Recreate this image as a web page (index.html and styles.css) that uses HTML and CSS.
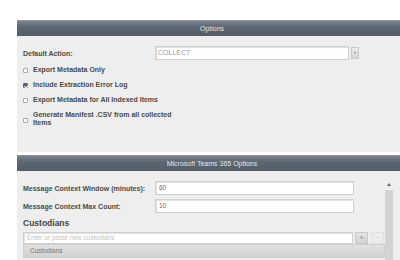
FILE: index.html
```html
<!DOCTYPE html>
<html lang="en">
<head>
    <meta charset="UTF-8">
    <title>Options</title>
    <link rel="stylesheet" href="styles.css">
</head>
<body>
    <div class="page">
        <div class="panel">
            <div class="panel-header">Options</div>
            <div class="panel-body first">
                <div class="field-row">
                    <label class="field-label">Default Action:</label>
                    <div class="select">
                        <div class="select-box">COLLECT</div>
                        <div class="select-btn"><span class="caret"></span></div>
                    </div>
                </div>
                <div class="check-row"><span class="check"></span><span>Export Metadata Only</span></div>
                <div class="check-row"><span class="check checked"></span><span>Include Extraction Error Log</span></div>
                <div class="check-row"><span class="check"></span><span>Export Metadata for All Indexed Items</span></div>
                <div class="check-row two-line"><span class="check"></span><span class="wrap">Generate Manifest .CSV from all collected Items</span></div>
            </div>
        </div>

        <div class="panel">
            <div class="panel-header">Microsoft Teams 365 Options</div>
            <div class="panel-body second">
                <div class="content">
                    <div class="field-row">
                        <label class="field-label">Message Context Window (minutes):</label>
                        <div class="text-input">60</div>
                    </div>
                    <div class="field-row">
                        <label class="field-label">Message Context Max Count:</label>
                        <div class="text-input">10</div>
                    </div>
                    <h3 class="section-title">Custodians</h3>
                    <div class="add-row">
                        <div class="text-input wide placeholder">Enter or paste new custodians</div>
                        <div class="small-btn">+</div>
                        <div class="small-btn light">&minus;</div>
                    </div>
                    <div class="list-header">Custodians</div>
                </div>
                <div class="scrollbar">
                    <div class="scroll-arrow"></div>
                    <div class="scroll-track"></div>
                </div>
            </div>
        </div>
    </div>
</body>
</html>
```

FILE: styles.css
```css
* {
    margin: 0;
    padding: 0;
    box-sizing: border-box;
}

body {
    font-family: 'Liberation Sans', Arial, sans-serif;
    background: #ffffff;
    width: 400px;
    height: 260px;
    overflow: hidden;
}

.page {
    padding: 20px 0 0 17px;
}

.panel {
    width: 390px;
    margin-bottom: 3px;
}

.panel-header {
    height: 16px;
    background: linear-gradient(#7b838f, #5d6571 40%, #545c68);
    color: #e4e6ea;
    font-size: 7px;
    line-height: 16px;
    text-align: center;
    border-top: 1px solid #8c939d;
}

.panel-body {
    background: #eeeeee;
    padding-left: 6px;
}

.panel-body.first {
    height: 116px;
    padding-top: 10px;
}

.panel-body.first .field-row {
    margin-bottom: 2px;
}

.field-row {
    display: flex;
    align-items: center;
    height: 14px;
    margin-bottom: 4px;
}

.field-label {
    width: 132px;
    font-size: 7px;
    font-weight: bold;
    color: #4a4a4a;
}

.select {
    display: flex;
    align-items: center;
}

.select-box {
    width: 194px;
    height: 14px;
    background: #fff;
    border: 1px solid #cfcfcf;
    box-shadow: inset 1px 1px 1px #ddd;
    font-size: 7px;
    color: #999;
    line-height: 12px;
    padding-left: 2px;
}

.select-btn {
    width: 8px;
    height: 12px;
    margin-left: 2px;
    background: linear-gradient(#eaeaea, #d4d4d4);
    border: 1px solid #cacaca;
    display: flex;
    align-items: center;
    justify-content: center;
}

.caret {
    width: 0;
    height: 0;
    border-left: 1.5px solid transparent;
    border-right: 1.5px solid transparent;
    border-top: 2px solid #888;
}

.check-row {
    display: flex;
    align-items: center;
    height: 15px;
    font-size: 7px;
    font-weight: bold;
    color: #4a4a4a;
}

.check-row.two-line {
    height: 20px;
    margin-top: 2px;
}

.wrap {
    width: 140px;
    line-height: 8px;
}

.check {
    position: relative;
    width: 5px;
    height: 5px;
    border: 1px solid #aaa;
    border-radius: 1px;
    background: #fff;
    margin-right: 5px;
    margin-top: 2px;
    flex-shrink: 0;
}

.check.checked {
    background: #5a626d;
    border-color: #5a626d;
}

.check.checked::after {
    content: "";
    position: absolute;
    left: 0.5px;
    top: -0.5px;
    width: 1.5px;
    height: 2.5px;
    border-right: 1px solid #fff;
    border-bottom: 1px solid #fff;
    transform: rotate(40deg);
}

.panel-body.second {
    display: flex;
    height: 89px;
}

.content {
    width: 362px;
    padding-top: 10px;
}

.text-input {
    width: 199px;
    height: 14px;
    background: #fff;
    border: 1px solid #cfcfcf;
    box-shadow: inset 1px 1px 1px #e2e2e2;
    font-size: 6.5px;
    color: #666;
    line-height: 12px;
    padding-left: 3px;
}

.section-title {
    font-size: 8.5px;
    font-weight: bold;
    color: #444;
    height: 15px;
    line-height: 12px;
    margin-top: 1px;
}

.add-row {
    display: flex;
    align-items: center;
    height: 12px;
}

.text-input.wide {
    width: 330px;
    height: 12px;
    line-height: 10px;
}

.placeholder {
    color: #c4c4c4;
}

.small-btn {
    width: 13px;
    height: 12px;
    margin-left: 2px;
    background: linear-gradient(#e4e4e4, #d2d2d2);
    border: 1px solid #c8c8c8;
    font-size: 7px;
    color: #888;
    text-align: center;
    line-height: 10px;
}

.small-btn.light {
    background: #ececec;
    border-color: #e0e0e0;
    color: #ccc;
    margin-left: 3px;
}

.list-header {
    height: 14px;
    background: linear-gradient(#e0e0e0, #d3d3d3);
    border: 1px solid #d0d0d0;
    font-size: 6.5px;
    color: #777;
    line-height: 12px;
    padding-left: 6px;
}

.scrollbar {
    width: 8px;
    padding-top: 12px;
    display: flex;
    flex-direction: column;
    align-items: center;
}

.scroll-arrow {
    width: 0;
    height: 0;
    border-left: 2.5px solid transparent;
    border-right: 2.5px solid transparent;
    border-bottom: 3px solid #666;
    margin-bottom: 4px;
}

.scroll-track {
    width: 8px;
    flex: 1;
    background: #d3d3d3;
}
```
